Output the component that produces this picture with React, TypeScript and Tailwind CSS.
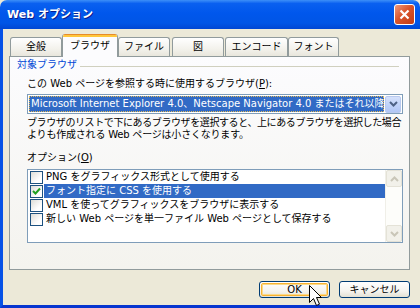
import React from 'react';

const tabs = [
  { label: '全般', w: 'w-[52px]', ml: 'ml-[1px]' },
  { label: 'ブラウザ', w: 'w-[56px]', ml: 'ml-0', active: true },
  { label: 'ファイル', w: 'w-[52px]', ml: 'ml-0' },
  { label: '図', w: 'w-[52px]', ml: 'ml-[2px]' },
  { label: 'エンコード', w: 'w-[63px]', ml: 'ml-[1px]' },
  { label: 'フォント', w: 'w-[51px]', ml: 'ml-0' },
];

const options = [
  { label: 'PNG をグラフィックス形式として使用する', checked: false },
  { label: 'フォント指定に CSS を使用する', checked: true, selected: true },
  { label: 'VML を使ってグラフィックスをブラウザに表示する', checked: false },
  { label: '新しい Web ページを単一ファイル Web ページとして保存する', checked: false },
];

function Chevron({ up, color }: { up?: boolean; color: string }) {
  return (
    <svg width="9" height="6" viewBox="0 0 9 6">
      <path d={up ? 'M1 5 L4.5 1.5 L8 5' : 'M1 1 L4.5 4.5 L8 1'} fill="none" stroke={color} strokeWidth="2" />
    </svg>
  );
}

function Checkbox({ checked }: { checked: boolean }) {
  return (
    <div className="w-[13px] h-[13px] border border-[#1c5180] bg-[linear-gradient(135deg,#dcdcd7,#ffffff_70%)] flex items-center justify-center shrink-0">
      {checked && (
        <svg width="9" height="9" viewBox="0 0 9 9">
          <path d="M1 4 L3.5 6.5 L8 1.5" fill="none" stroke="#21a121" strokeWidth="2" />
        </svg>
      )}
    </div>
  );
}

function XpButton({ label, focused }: { label: React.ReactNode; focused?: boolean }) {
  return (
    <div className="w-[71px] h-[17px] rounded-[3px] border border-[#003c74] bg-[linear-gradient(to_bottom,#ffffff,#f5f4ef_60%,#e3e1d4)] p-[1px]">
      <div
        className={
          focused
            ? 'w-full h-full rounded-[2px] border border-[#f8b330] shadow-[inset_0_0_0_1px_#fbd98a] flex items-center justify-center text-black'
            : 'w-full h-full rounded-[2px] flex items-center justify-center text-black'
        }
      >
        {label}
      </div>
    </div>
  );
}

export default function App() {
  return (
    <div className="relative w-[420px] h-[308px] overflow-hidden bg-[#ece9d8] font-['DejaVu_Sans','Noto_Sans_CJK_JP',sans-serif] text-[10px] leading-[12px] text-black">
      {/* title bar */}
      <div className="h-[29px] rounded-t-[7px] bg-[linear-gradient(to_bottom,#3d8ff8_0%,#0a60f0_12%,#0057ec_45%,#0055e6_80%,#0046d3_100%)] flex items-center pl-[7px] pr-[5px]">
        <div className="text-white font-bold text-[11px] [text-shadow:1px_1px_0_#0a1e8c] flex-1">Web オプション</div>
        <div className="w-[21px] h-[21px] rounded-[3px] border border-white bg-[linear-gradient(135deg,#ee9a7e,#d9552c_45%,#c23b14)] flex items-center justify-center">
          <svg width="11" height="11" viewBox="0 0 11 11">
            <path d="M1.5 1.5 L9.5 9.5 M9.5 1.5 L1.5 9.5" stroke="white" strokeWidth="2.2" />
          </svg>
        </div>
      </div>

      {/* body */}
      <div className="h-[279px] border-l-[3px] border-l-[#0652e6] border-b-[3px] border-b-[#0735cf] pl-[6px] pt-[5px] flex flex-col">
        {/* tabs */}
        <div className="flex items-end h-[22px]">
          {tabs.map((t) =>
            t.active ? (
              <div
                key={t.label}
                className={`${t.w} ${t.ml} relative z-10 h-[23px] -mb-px rounded-t-[3px] border-x border-[#919b9c] bg-[#fcfcfe] overflow-hidden flex flex-col`}
              >
                <div className="h-[1px] bg-[#e68b2c]" />
                <div className="h-[2px] bg-[#ffc73c]" />
                <div className="flex-1 flex items-center justify-center pb-[2px]">{t.label}</div>
              </div>
            ) : (
              <div
                key={t.label}
                className={`${t.w} ${t.ml} h-[19px] rounded-t-[3px] border border-b-0 border-[#919b9c] bg-[linear-gradient(to_bottom,#ffffff,#f3f2ec_60%,#e8e6dc)] flex items-center justify-center`}
              >
                {t.label}
              </div>
            )
          )}
        </div>

        {/* panel */}
        <div className="w-[401px] h-[214px] border border-[#919b9c] bg-[linear-gradient(to_bottom,#fcfcfe,#f4f3ee)] pt-[2px] pl-[7px]">
          <div className="flex items-center gap-[3px] pr-[10px]">
            <span className="text-[#0046d5]">対象ブラウザ</span>
            <div className="flex-1 h-px bg-[#d0d0bf] mt-[3px]" />
          </div>

          <div className="pl-[10px]">
            <div className="mt-[7px]">
              この Web ページを参照する時に使用するブラウザ(<u>P</u>):
            </div>

            {/* select */}
            <div className="mt-[4px] w-[376px] h-[20px] border border-[#7f9db9] bg-white flex items-center p-[1px]">
              <div className="flex-1 h-[16px] bg-[#316ac5] border border-dotted border-[#e2b958] text-white whitespace-nowrap overflow-hidden pl-[1px] flex items-center">
                Microsoft Internet Explorer 4.0、Netscape Navigator 4.0 またはそれ以降
              </div>
              <div className="ml-[1px] w-[16px] h-[17px] rounded-[2px] border border-[#b9c9ef] bg-[linear-gradient(to_bottom,#d6e1fb,#c1d3fa_50%,#b1c6f6)] flex items-center justify-center">
                <Chevron color="#4d6185" />
              </div>
            </div>

            <div className="mt-[3px] w-[376px]">
              <div className="whitespace-nowrap tracking-[-0.4px]">ブラウザのリストで下にあるブラウザを選択すると、上にあるブラウザを選択した場合</div>
              <div className="whitespace-nowrap tracking-[-0.2px]">よりも作成される Web ページは小さくなります。</div>
            </div>

            <div className="mt-[11px]">
              オプション(<u>O</u>)
            </div>

            {/* list */}
            <div className="mt-[5px] w-[376px] h-[74px] border border-[#7f9db9] bg-white flex">
              <div className="flex-1 flex flex-col">
                {options.map((o) => (
                  <div key={o.label} className="h-[14px] flex items-center pl-[2px]">
                    <Checkbox checked={o.checked} />
                    <div
                      className={
                        o.selected
                          ? 'ml-[1px] flex-1 h-[14px] bg-[#316ac5] text-white pl-[2px] flex items-center whitespace-nowrap'
                          : 'ml-[1px] flex-1 h-[14px] pl-[2px] flex items-center whitespace-nowrap'
                      }
                    >
                      {o.label}
                    </div>
                  </div>
                ))}
              </div>
              <div className="w-[17px] flex flex-col bg-[#fdfdfa] border-l border-[#f0efe8]">
                <div className="h-[17px] rounded-[2px] border border-[#e4e2d7] bg-[#f2f1ea] flex items-center justify-center">
                  <Chevron up color="#c9c6b8" />
                </div>
                <div className="flex-1" />
                <div className="h-[17px] rounded-[2px] border border-[#e4e2d7] bg-[#f2f1ea] flex items-center justify-center">
                  <Chevron color="#c9c6b8" />
                </div>
              </div>
            </div>
          </div>
        </div>

        {/* buttons */}
        <div className="w-[401px] mt-[11px] flex justify-end gap-[9px]">
          <XpButton label="OK" focused />
          <XpButton label="キャンセル" />
        </div>
      </div>

      {/* mouse cursor */}
      <svg className="absolute left-[309px] top-[285px]" width="14" height="23" viewBox="0 0 14 23">
        <path
          d="M0.5 0.5 L0.5 17.5 L4.5 13.5 L7.5 20.5 L10.5 19.2 L7.5 12.5 L12.5 12.5 Z"
          fill="white"
          stroke="black"
          strokeWidth="1"
          strokeLinejoin="miter"
        />
      </svg>
    </div>
  );
}
